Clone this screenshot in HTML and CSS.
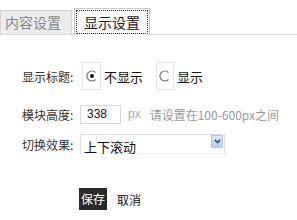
FILE: index.html
```html
<!DOCTYPE html>
<html>
<head>
<meta charset="utf-8">
<link rel="stylesheet" href="styles.css">
</head>
<body>
<div class="tabs">
  <div class="tab">内容设置</div>
  <div class="tab active"><span class="focus">显示设置</span></div>
</div>
<div class="form">
  <div class="row row-title">
    <div class="label">显示标题:</div>
    <span class="radio-box"><svg width="12" height="12" viewBox="0 0 12 12"><path d="M9.5 2.5 A5 5 0 1 0 9.5 9.5" fill="none" stroke="#777" stroke-width="1.2"/><circle cx="6" cy="6" r="2" fill="#111"/></svg></span>
    <span class="radio-text">不显示</span>
    <span class="radio-box second"><svg width="12" height="12" viewBox="0 0 12 12"><path d="M9.5 2.5 A5 5 0 1 0 9.5 9.5" fill="none" stroke="#777" stroke-width="1.2"/></svg></span>
    <span class="radio-text">显示</span>
  </div>
  <div class="row row-height">
    <div class="label">模块高度:</div>
    <div class="input">338</div>
    <span class="unit">px</span>
    <span class="hint">请设置在100-600px之间</span>
  </div>
  <div class="row row-effect">
    <div class="label">切换效果:</div>
    <div class="select">
      <span class="select-text">上下滚动</span>
      <span class="select-btn"><svg width="7" height="5" viewBox="0 0 7 5"><path d="M0.8 0.8 L3.5 3.6 L6.2 0.8" fill="none" stroke="#2a4f8c" stroke-width="1.6"/></svg></span>
    </div>
  </div>
  <div class="row buttons">
    <div class="btn-save">保存</div>
    <div class="btn-cancel">取消</div>
  </div>
</div>
</body>
</html>
```
FILE: styles.css
```css
body {
  margin: 0;
  background: #fff;
  font-family: "Noto Sans CJK SC", "Liberation Sans", sans-serif;
  font-size: 12px;
  color: #222;
}
.tabs {
  display: flex;
  align-items: flex-end;
  height: 34px;
  border-bottom: 1px solid #dcdcdc;
}
.tab {
  box-sizing: border-box;
  height: 24px;
  width: 72px;
  padding-left: 4px;
  background: #ececec;
  border: 1px solid #d6d6d6;
  border-bottom: none;
  color: #888;
  font-size: 14px;
  line-height: 22px;
}
.tab.active {
  height: 27px;
  width: 76px;
  margin-left: 2px;
  margin-bottom: -1px;
  padding: 1px;
  background: #fff;
  border-color: #c8c8c8;
  color: #222;
}
.tab .focus {
  display: block;
  height: 24px;
  box-sizing: border-box;
  border: 1px dotted #333;
  padding-left: 7px;
  line-height: 22px;
}
.form {
  padding-left: 22px;
}
.row {
  display: flex;
  align-items: center;
}
.label {
  width: 58px;
  color: #333;
}
.row-title {
  margin-top: 27px;
  height: 28px;
}
.radio-box {
  box-sizing: border-box;
  width: 19px;
  height: 28px;
  border: 1px solid #e4e4e4;
  display: flex;
  align-items: center;
  justify-content: center;
  margin-left: 2px;
}
.radio-box.second {
  margin-left: 13px;
  width: 18px;
}
.radio-text {
  margin-left: 3px;
  font-size: 13px;
  color: #111;
}
.row-height {
  margin-top: 14px;
  height: 20px;
}
.input {
  box-sizing: border-box;
  width: 41px;
  height: 19px;
  border: 1px solid #d8d8d8;
  padding-left: 6px;
  line-height: 17px;
  font-family: "Liberation Sans", sans-serif;
  font-size: 12px;
  color: #111;
}
.unit {
  margin-left: 7px;
  color: #aaa;
  font-family: "Liberation Sans", sans-serif;
}
.hint {
  margin-left: 9px;
  color: #999;
}
.row-effect {
  margin-top: 10px;
  height: 20px;
}
.select {
  box-sizing: border-box;
  width: 145px;
  height: 20px;
  border: 1px solid #e0e0e0;
  border-bottom-color: #f2f2f2;
  display: flex;
  align-items: flex-start;
  justify-content: space-between;
  padding: 0 1px 0 3px;
}
.select-text {
  margin-top: 5px;
  line-height: 13px;
  font-size: 13px;
  color: #111;
}
.select-btn {
  width: 12px;
  height: 13px;
  background: linear-gradient(#dfe9f9, #b9cdee);
  border: 1px solid #b7c8e6;
  box-sizing: border-box;
  display: flex;
  align-items: center;
  justify-content: center;
}
.buttons {
  margin-top: 34px;
  padding-left: 57px;
  height: 22px;
}
.btn-save {
  width: 28px;
  height: 22px;
  background: #2a2a2a;
  color: #fff;
  text-align: center;
  line-height: 22px;
}
.btn-cancel {
  margin-left: 10px;
  color: #111;
}
```
